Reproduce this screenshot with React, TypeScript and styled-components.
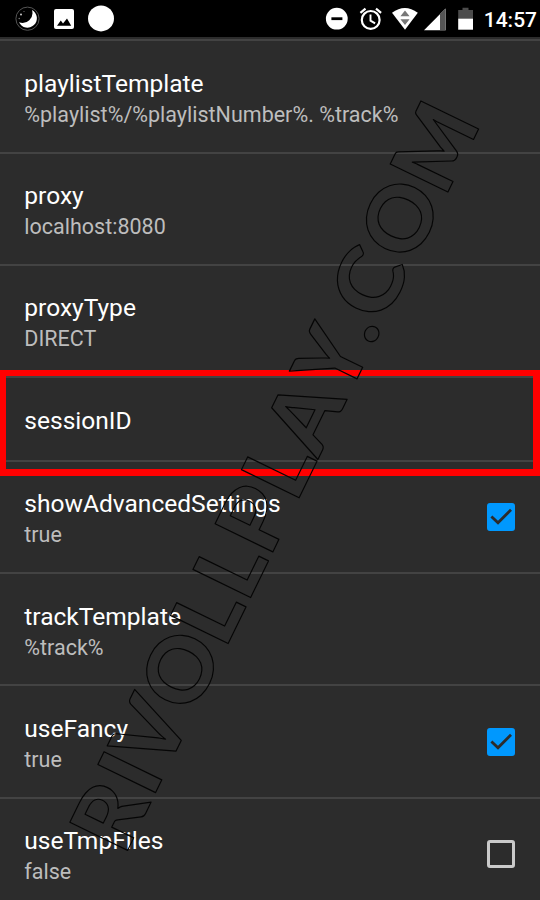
import React from "react";
import styled, { createGlobalStyle } from "styled-components";

const GlobalStyle = createGlobalStyle`
  body {
    margin: 0;
    background: #2c2c2c;
    font-family: Roboto, "Noto Sans", sans-serif;
  }
`;

const Screen = styled.div`
  position: relative;
  width: 540px;
  height: 900px;
  overflow: hidden;
  background: #2c2c2c;
`;

const StatusBar = styled.header`
  display: flex;
  align-items: center;
  justify-content: space-between;
  height: 37px;
  margin-bottom: 2.4px;
  padding: 0 3px 0 15px;
  background: #000;
`;

const IconGroup = styled.div<{ $gap: number }>`
  display: flex;
  align-items: center;
  gap: ${({ $gap }) => $gap}px;

  svg {
    display: block;
  }
`;

const Clock = styled.span`
  margin-left: 2px;
  padding-top: 3px;
  color: #fff;
  font-size: 21px;
  font-weight: 500;
  line-height: 34px;
`;

const List = styled.main`
  display: flex;
  flex-direction: column;
`;

const Row = styled.section<{ $compact?: boolean }>`
  position: relative;
  display: flex;
  flex: none;
  align-items: center;
  justify-content: space-between;
  box-sizing: border-box;
  height: ${({ $compact }) => ($compact ? 83.8 : 112.25)}px;
  padding: 0 25px 0 24.3px;
  border-top: 2px solid #434343;
`;

const Labels = styled.div`
  display: flex;
  flex-direction: column;
  padding-top: 3.8px;
`;

const Title = styled.span`
  color: #fff;
  font-size: 24.55px;
  line-height: 32px;
`;

const Summary = styled.span`
  color: #bdbdbd;
  font-size: 21.5px;
  line-height: 29px;
`;

const Highlight = styled.div`
  position: absolute;
  z-index: 1;
  inset: -8px 0 -16px;
  border: solid #f00;
  border-width: 6px 7px 7px 6px;
`;

const Box = styled.span<{ $checked: boolean }>`
  display: flex;
  box-sizing: border-box;
  width: 28px;
  height: 28px;
  border: 3px solid ${({ $checked }) => ($checked ? "#0098fe" : "#cacaca")};
  border-radius: 3px;
  background: ${({ $checked }) => ($checked ? "#0098fe" : "transparent")};

  svg {
    display: block;
    margin: -3px;
    flex: none;
  }
`;

const WatermarkLayer = styled.svg`
  position: absolute;
  z-index: 2;
  top: 0;
  left: 0;
  pointer-events: none;

  text {
    font-family: Lato, sans-serif;
    font-size: 88.5px;
    font-weight: 900;
    fill: none;
    stroke: #050505;
    stroke-width: 1.2px;
    stroke-linejoin: round;
    vector-effect: non-scaling-stroke;
  }
`;

// letter, x of its origin along the baseline, horizontal stretch
const LETTERS: [string, number, number][] = [
  ["R", -6.5, 1.05],
  ["I", 57.8, 1.06],
  ["V", 86.5, 0.985],
  ["O", 149.5, 1.03],
  ["L", 223.5, 1.07],
  ["L", 274.6, 1.07],
  ["P", 325.7, 1.05],
  ["L", 385.7, 1.07],
  ["A", 436.3, 1.05],
  ["Y", 503.2, 0.97],
  [".", 560.5, 1.08],
  ["C", 585, 1.09],
  ["O", 651.5, 1.03],
  ["M", 726.2, 0.99],
];

function Watermark() {
  return (
    <WatermarkLayer width="540" height="900">
      <g transform="translate(127.3 851) rotate(-64.05)">
        {LETTERS.map(([char, x, stretch], i) => (
          <text key={i} transform={`translate(${x} 0) scale(${stretch} 1)`}>
            {char}
          </text>
        ))}
      </g>
    </WatermarkLayer>
  );
}

function MoonIcon() {
  return (
    <svg width="25" height="26" viewBox="0 0 25 26">
      <circle cx="12.5" cy="12.7" r="11.6" fill="#000" stroke="#555" strokeWidth="1" />
      <path d="M17 4A9.4 9.4 0 1 1 4 16.3A10 10 0 0 0 17 4Z" fill="#fff" />
      <circle cx="6" cy="8.5" r="1" fill="#ccc" />
      <circle cx="4.2" cy="12.5" r=".7" fill="#888" />
      <circle cx="9" cy="5.5" r=".5" fill="#888" />
    </svg>
  );
}

function PictureIcon() {
  return (
    <svg width="20" height="20" viewBox="0 0 20 20">
      <rect width="20" height="20" rx="2" fill="#fff" />
      <path d="M3 16.7L6.8 11.6L9 14.4L13 9.6L17.2 16.7Z" fill="#000" />
    </svg>
  );
}

function DotIcon() {
  return (
    <svg width="27" height="27" viewBox="0 0 27 27">
      <circle cx="13" cy="13.4" r="13" fill="#fff" />
    </svg>
  );
}

function StatusIcons() {
  return (
    <svg width="149" height="30" viewBox="325 3.5 149 30">
      <circle cx="336.8" cy="18.2" r="10.9" fill="#fff" />
      <rect x="331.4" y="16.8" width="11" height="2.8" fill="#000" />
      <g fill="none" stroke="#fff" strokeWidth="2.2">
        <circle cx="370.7" cy="19.4" r="8.9" />
        <path d="M370.5 14v6.1l4.6 2.8" strokeWidth="1.9" />
        <path d="M360.4 12.4l5.1-4.2M376 8.2l5.1 4.2" />
      </g>
      <path d="M392 12.3Q404.8 2.9 417.8 12.3L405 29.2Z" fill="#fff" />
      <path d="M400.4 15.8L405 10L409.6 15.8ZM400.4 18.8H409.6L405 24.4Z" fill="#777" />
      <path d="M445.6 8V29.7H424Z" fill="#fff" />
      <path d="M440 13.6L445.6 8V29.7H440Z" fill="#555" />
      <path d="M458.2 9.4H462.5V7.2H468.5V9.4H473V18.5H458.2Z" fill="#4c4c4c" />
      <rect x="458.2" y="18.2" width="14.8" height="11" fill="#fff" />
    </svg>
  );
}

function Checkbox({ checked }: { checked: boolean }) {
  return (
    <Box $checked={checked} role="checkbox" aria-checked={checked}>
      {checked && (
        <svg width="28" height="28" viewBox="0 0 28 28">
          <path d="M4.4 13.4L11 19.8L24 6.7" fill="none" stroke="#2c2c2c" strokeWidth="2.8" />
        </svg>
      )}
    </Box>
  );
}

interface Setting {
  title: string;
  summary?: string;
  checked?: boolean;
  highlighted?: boolean;
}

const SETTINGS: Setting[] = [
  { title: "playlistTemplate", summary: "%playlist%/%playlistNumber%. %track%" },
  { title: "proxy", summary: "localhost:8080" },
  { title: "proxyType", summary: "DIRECT" },
  { title: "sessionID", highlighted: true },
  { title: "showAdvancedSettings", summary: "true", checked: true },
  { title: "trackTemplate", summary: "%track%" },
  { title: "useFancy", summary: "true", checked: true },
  { title: "useTmpFiles", summary: "false", checked: false },
];

export default function App() {
  return (
    <Screen>
      <GlobalStyle />
      <StatusBar>
        <IconGroup $gap={14}>
          <MoonIcon />
          <PictureIcon />
          <DotIcon />
        </IconGroup>
        <IconGroup $gap={8}>
          <StatusIcons />
          <Clock>14:57</Clock>
        </IconGroup>
      </StatusBar>
      <List>
        {SETTINGS.map(({ title, summary, checked, highlighted }) => (
          <Row key={title} $compact={!summary}>
            <Labels>
              <Title>{title}</Title>
              {summary && <Summary>{summary}</Summary>}
            </Labels>
            {checked !== undefined && <Checkbox checked={checked} />}
            {highlighted && <Highlight />}
          </Row>
        ))}
      </List>
      <Watermark />
    </Screen>
  );
}
